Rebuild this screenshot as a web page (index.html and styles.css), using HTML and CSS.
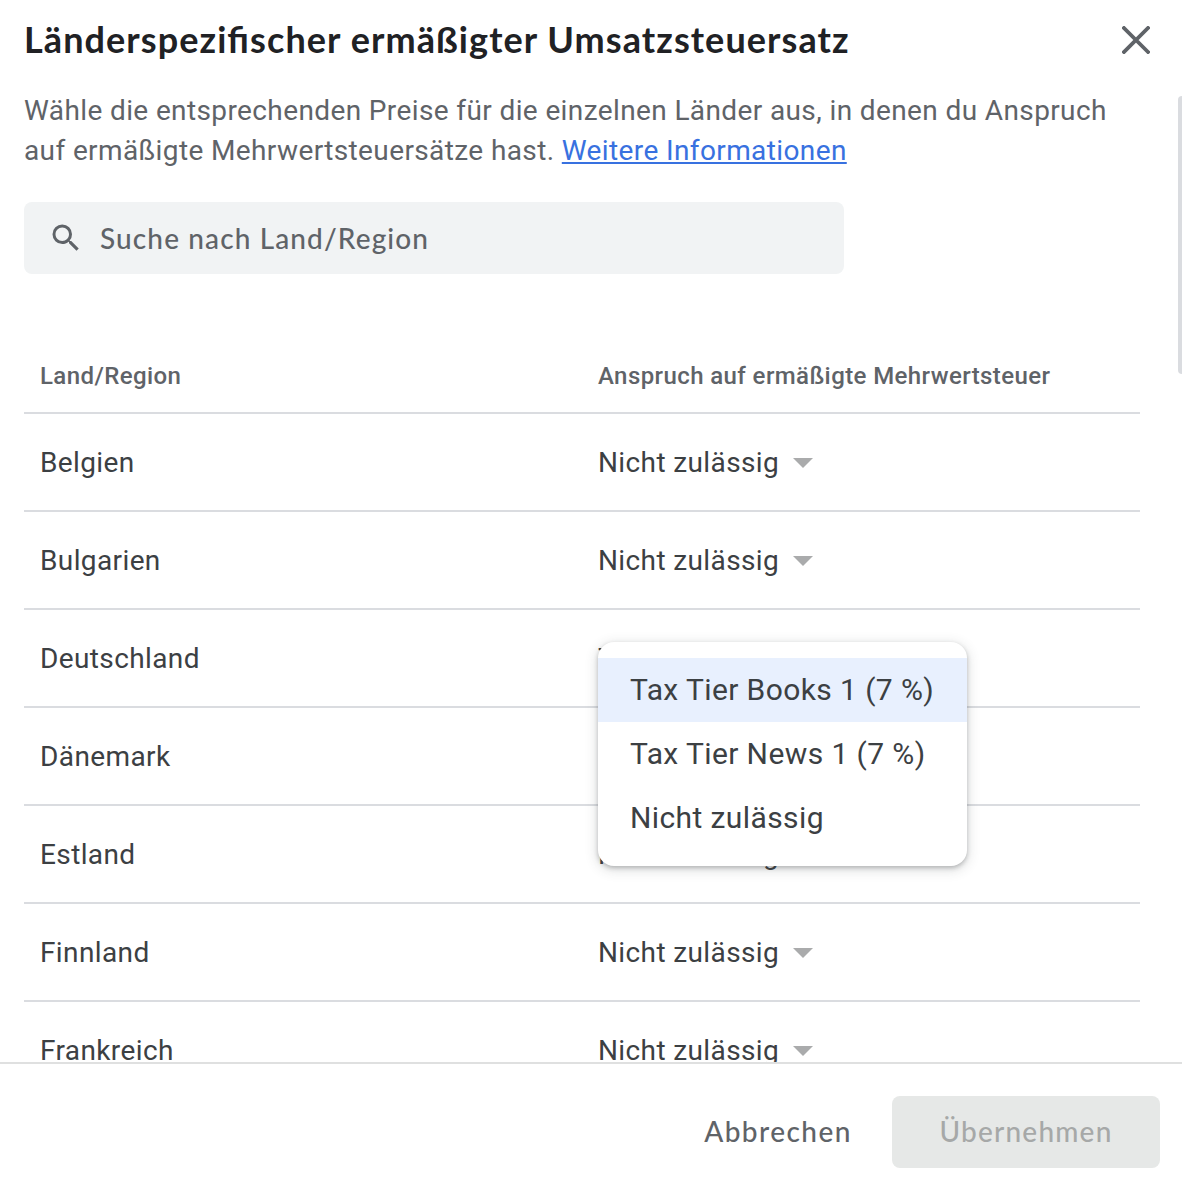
FILE: index.html
```html
<!DOCTYPE html>
<html lang="de">
<head>
<meta charset="utf-8">
<title>Länderspezifischer ermäßigter Umsatzsteuersatz</title>
<link rel="stylesheet" href="styles.css">
</head>
<body>
<div class="dialog" role="dialog">
  <header class="dialog-header">
    <h1 class="title">Länderspezifischer ermäßigter Umsatzsteuersatz</h1>
    <button class="close" aria-label="Schließen">
      <svg width="28" height="28" viewBox="0 0 28 28"><path d="M2 2 26 26M26 2 2 26" fill="none" stroke="#5f6368" stroke-width="3.8" stroke-linecap="square"/></svg>
    </button>
  </header>
  <main class="dialog-body">
    <p class="intro">Wähle die entsprechenden Preise für die einzelnen Länder aus, in denen du Anspruch<br>auf ermäßigte Mehrwertsteuersätze hast. <a class="link" href="#">Weitere Informationen</a></p>
    <div class="search">
      <svg class="search-icon" width="36" height="36" viewBox="0 0 24 24"><path fill="#5f6368" d="M15.5 14h-.79l-.28-.27A6.471 6.471 0 0 0 16 9.5 6.5 6.5 0 1 0 9.5 16c1.61 0 3.09-.59 4.23-1.57l.27.28v.79l5 4.99L20.49 19l-4.99-5zm-6 0C7.01 14 5 11.99 5 9.5S7.01 5 9.5 5 14 7.01 14 9.5 11.99 14 9.5 14z"/></svg>
      <span class="search-text">Suche nach Land/Region</span>
    </div>
    <div class="table">
      <div class="row head"><span>Land/Region</span><span>Anspruch auf ermäßigte Mehrwertsteuer</span></div>
      <div class="row"><span>Belgien</span><div class="select">Nicht zulässig<i class="arrow"></i></div></div>
      <div class="row"><span>Bulgarien</span><div class="select">Nicht zulässig<i class="arrow"></i></div></div>
      <div class="row"><span>Deutschland</span><div class="select">Tax Tier Books 1 (7 %)
        <div class="menu">
          <div class="option selected">Tax Tier Books 1 (7 %)</div>
          <div class="option">Tax Tier News 1 (7 %)</div>
          <div class="option">Nicht zulässig</div>
        </div>
      </div></div>
      <div class="row"><span>Dänemark</span><div class="select">Nicht zulässig<i class="arrow"></i></div></div>
      <div class="row"><span>Estland</span><div class="select">Nicht zulässig<i class="arrow"></i></div></div>
      <div class="row"><span>Finnland</span><div class="select">Nicht zulässig<i class="arrow"></i></div></div>
      <div class="row"><span>Frankreich</span><div class="select">Nicht zulässig<i class="arrow"></i></div></div>
    </div>
    <div class="scroll-thumb"></div>
  </main>
  <footer class="dialog-footer">
    <button class="btn cancel">Abbrechen</button>
    <button class="btn apply" disabled>Übernehmen</button>
  </footer>
</div>
</body>
</html>
```
FILE: styles.css
```css
* { box-sizing: border-box; }
body {
  margin: 0;
  background: #fff;
  color: #3c4043;
  font: 400 28px/40px Roboto, sans-serif;
  letter-spacing: 0.385px;
}
button { border: 0; padding: 0; background: none; }
.dialog { display: flex; flex-direction: column; height: 1190px; overflow: hidden; }
.dialog-header {
  display: flex;
  align-items: center;
  justify-content: space-between;
  flex: 0 0 80px;
  padding: 0 32px 0 24px;
}
.title {
  margin: 0;
  padding-bottom: 2px;
  color: #202124;
  font: 700 36px/48px Lato, sans-serif;
  font-feature-settings: "liga" 1;
  letter-spacing: 1.08px;
  white-space: nowrap;
}
.close { display: flex; }
.dialog-body { position: relative; flex: 1; min-height: 0; overflow: hidden; padding: 11px 42px 0 24px; }
.intro { margin: 0 0 31px; color: #5f6368; white-space: nowrap; }
.link { color: #3871e0; text-decoration-thickness: 2px; text-underline-offset: 2px; }
.search {
  display: flex;
  align-items: center;
  gap: 16px;
  width: 820px;
  height: 72px;
  margin-bottom: 64px;
  padding-left: 24px;
  border-radius: 8px;
  background: #f1f3f4;
  color: #5f6368;
}
.search-icon { flex: none; }
.search-text { font: 500 28px/40px Lato, sans-serif; letter-spacing: 1.12px; }
.row {
  display: grid;
  grid-template-columns: 558px 1fr;
  align-items: center;
  height: 98px;
  padding: 2px 0 0 16px;
  border-bottom: 2px solid #dadce0;
}
.head { height: 76px; color: #5f6368; font-size: 24px; font-weight: 500; letter-spacing: 0.41px; }
.select { position: relative; display: flex; align-items: center; }
.arrow { margin-left: 14px; border: 10px solid transparent; border-top-color: #aaabac; border-bottom: 0; }
.menu {
  position: absolute;
  z-index: 1;
  top: 3px;
  left: 0;
  width: 369px;
  height: 224px;
  padding: 16px 0;
  border-radius: 16px;
  background: #fff;
  box-shadow: 0 2px 4px rgba(60, 64, 67, 0.3), 0 3px 12px 2px rgba(60, 64, 67, 0.15);
}
.option { height: 64px; padding-left: 32px; font-size: 30px; line-height: 64px; letter-spacing: 0.4px; white-space: nowrap; }
.selected { background: #e8f0fe; }
.scroll-thumb { position: absolute; top: 16px; right: 0; width: 4px; height: 278px; border-radius: 4px 0 0 4px; background: #dadce0; }
.dialog-footer {
  display: flex;
  align-items: center;
  justify-content: flex-end;
  flex: 0 0 128px;
  padding: 10px 22px 0 0;
  border-top: 2px solid #dfe0e0;
}
.btn { height: 72px; padding-bottom: 2px; border-radius: 8px; font: 500 28px/70px Lato, sans-serif; letter-spacing: 1.2px; }
.cancel { width: 188px; margin-right: 20px; color: #5f6368; letter-spacing: 1.45px; }
.apply { width: 268px; background: #e6e8e7; color: #a6a8a8; }
```
